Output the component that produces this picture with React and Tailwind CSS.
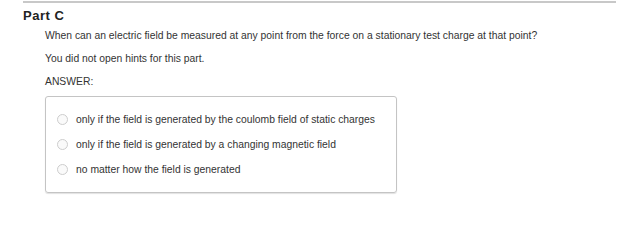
export default function App() {
  const opts = [
    "only if the field is generated by the coulomb field of static charges",
    "only if the field is generated by a changing magnetic field",
    "no matter how the field is generated",
  ];
  return (
    <div className="w-[630px] h-[219px] bg-white text-[#333] pl-[23px] pr-[14px] pt-px" style={{ fontFamily: '"Liberation Sans", Arial, sans-serif' }}>
      <div className="h-[2px] bg-[#c8c8c8]" />
      <div className="mt-[5px] text-[13px] font-bold leading-[15px] tracking-[0.5px] text-[#222]">Part C</div>
      <div className="pl-[22px] text-[10.35px]">
        <p className="mt-[6px] leading-[14px]">When can an electric field be measured at any point from the force on a stationary test charge at that point?</p>
        <p className="mt-[9px] leading-[14px]">You did not open hints for this part.</p>
        <p className="mt-[9px] leading-[14px]">ANSWER:</p>
        <div className="mt-[7px] w-[352px] h-[97px] border border-[#c4c4c4] rounded-[3px] shadow-[0_1px_1px_rgba(0,0,0,0.12)] pl-[11px] pt-[10px]">
          {opts.map((o, i) => (
            <div key={i} className="flex items-center h-[25px]">
              <span className="w-[11px] h-[11px] rounded-full border border-[#cdcdcd] bg-[#fafafa] shrink-0" />
              <span className="ml-[8px] leading-[14px]">{o}</span>
            </div>
          ))}
        </div>
      </div>
    </div>
  );
}
